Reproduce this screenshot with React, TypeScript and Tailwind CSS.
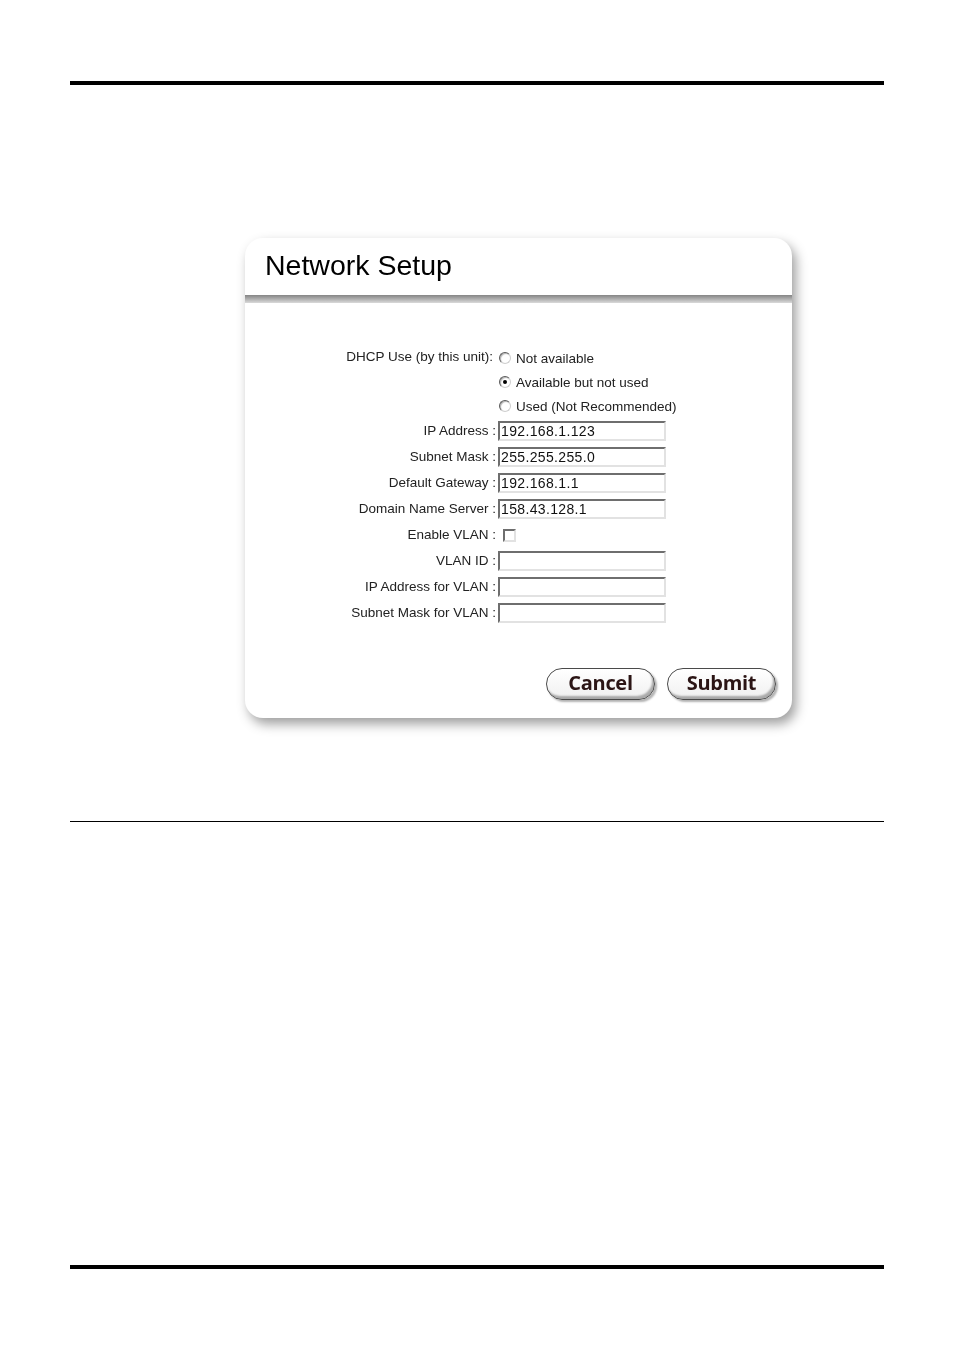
import React from "react";

const font = { fontFamily: '"Liberation Sans", Arial, sans-serif' };

function Radio({ checked }: { checked?: boolean }) {
  return (
    <span className="relative inline-flex h-[12px] w-[12px] items-center justify-center rounded-full border border-t-[#5a5a5a] border-l-[#5a5a5a] border-b-[#cfcfcf] border-r-[#cfcfcf] bg-white shadow-[inset_1px_1px_1px_rgba(0,0,0,0.3)]">
      {checked && <span className="h-[4px] w-[4px] rounded-full bg-black" />}
    </span>
  );
}

function TextBox({ value }: { value?: string }) {
  return (
    <div className="flex h-[20px] w-[168px] items-center border-2 border-t-[#6e6e6e] border-l-[#6e6e6e] border-b-[#e2e2e2] border-r-[#e2e2e2] bg-white pl-[1px] text-[14px] leading-none tracking-[0.35px] text-[#111]">
      {value}
    </div>
  );
}

function Label({ children }: { children: React.ReactNode }) {
  return (
    <div className="flex items-center justify-end pr-[2px] text-[13.5px] text-[#222]">
      {children}
    </div>
  );
}

function PillButton({ children }: { children: React.ReactNode }) {
  return (
    <button
      className="flex h-[32px] w-[109px] items-center justify-center rounded-full border-[1.5px] border-[#4a4a4a] bg-gradient-to-b from-white to-[#f0f0f0] pb-[2px] text-[20px] font-bold tracking-[-0.3px] text-[#2b1515] shadow-[inset_-2px_-3px_2px_rgba(0,0,0,0.3),inset_1px_1px_0_#fff,2px_2px_2px_rgba(0,0,0,0.3)]"
      style={{ fontFamily: '"Open Sans", "Liberation Sans", sans-serif' }}
    >
      {children}
    </button>
  );
}

const fields: [string, string][] = [
  ["IP Address :", "192.168.1.123"],
  ["Subnet Mask :", "255.255.255.0"],
  ["Default Gateway :", "192.168.1.1"],
  ["Domain Name Server :", "158.43.128.1"],
];

const vlanFields = ["VLAN ID :", "IP Address for VLAN :", "Subnet Mask for VLAN :"];

export default function App() {
  return (
    <div className="min-h-[1351px] w-[954px] bg-white px-[70px]" style={font}>
      <div className="h-[81px]" />
      <div className="h-[4px] bg-black" />

      <div className="ml-[175px] mt-[153px] w-[547px] drop-shadow-[4px_6px_6px_rgba(0,0,0,0.38)]">
        {/* header */}
        <div className="flex h-[57px] items-center rounded-t-[18px] bg-white pb-[3px] pl-[20px]">
          <h1 className="text-[28.5px] leading-none text-black">Network Setup</h1>
        </div>
        <div className="h-[8px] bg-gradient-to-b from-[#858585] to-[#dadada]" />

        {/* body */}
        <div className="rounded-b-[18px] bg-white pb-[18px] pr-[16px] pt-[43px]">
          <div className="grid grid-cols-[253px_1fr]">
            <Label>
              <span className="h-[24px] pr-[3px] leading-[22px]">DHCP Use (by this unit):</span>
            </Label>
            <div className="flex h-[24px] items-center gap-[5px] pl-[1px] text-[13.5px] text-[#222]">
              <Radio />
              <span className="pt-[2px]">Not available</span>
            </div>

            <div />
            <div className="flex h-[24px] items-center gap-[5px] pl-[1px] text-[13.5px] text-[#222]">
              <Radio checked />
              <span className="pt-[2px]">Available but not used</span>
            </div>

            <div />
            <div className="flex h-[24px] items-center gap-[5px] pl-[1px] text-[13.5px] text-[#222]">
              <Radio />
              <span className="pt-[2px]">Used (Not Recommended)</span>
            </div>

            {fields.map(([label, value]) => (
              <React.Fragment key={label}>
                <div className="h-[26px]">
                  <Label>
                    <span className="leading-[26px]">{label}</span>
                  </Label>
                </div>
                <div className="flex h-[26px] items-center">
                  <TextBox value={value} />
                </div>
              </React.Fragment>
            ))}

            <div className="h-[26px]">
              <Label>
                <span className="leading-[26px]">Enable VLAN :</span>
              </Label>
            </div>
            <div className="flex h-[26px] items-center pl-[5px]">
              <span className="h-[13px] w-[13px] border-2 border-t-[#6e6e6e] border-l-[#6e6e6e] border-b-[#e2e2e2] border-r-[#e2e2e2] bg-white" />
            </div>

            {vlanFields.map((label) => (
              <React.Fragment key={label}>
                <div className="h-[26px]">
                  <Label>
                    <span className="leading-[26px]">{label}</span>
                  </Label>
                </div>
                <div className="flex h-[26px] items-center">
                  <TextBox />
                </div>
              </React.Fragment>
            ))}
          </div>

          <div className="mt-[42px] flex justify-end gap-[12px]">
            <PillButton>Cancel</PillButton>
            <PillButton>Submit</PillButton>
          </div>
        </div>
      </div>

      <div className="mt-[103px] h-[1px] bg-black" />
      <div className="mt-[443px] h-[4px] bg-black" />
    </div>
  );
}
